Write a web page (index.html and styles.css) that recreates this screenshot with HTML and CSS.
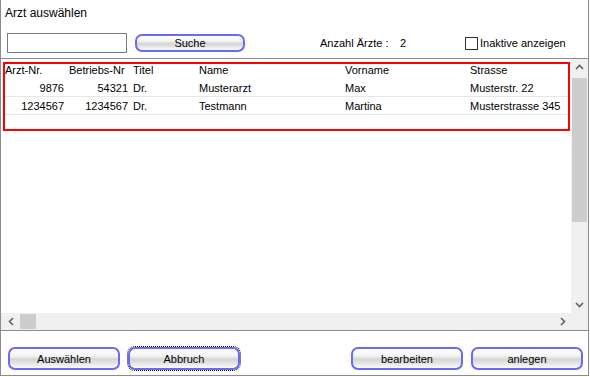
FILE: index.html
```html
<!DOCTYPE html>
<html lang="de">
<head>
    <meta charset="UTF-8">
    <title>Arzt auswählen</title>
    <link rel="stylesheet" href="styles.css">
</head>
<body>
<div class="window">
    <div class="title">Arzt auswählen</div>

    <div class="toolbar">
        <input type="text" class="search-input">
        <button class="btn btn-small">Suche</button>
        <span class="count-label">Anzahl Ärzte :</span>
        <span class="count-value">2</span>
        <span class="checkbox"></span>
        <span class="check-label">Inaktive anzeigen</span>
    </div>

    <div class="list">
        <div class="list-main">
            <div class="row head">
                <div class="cell">Arzt-Nr.</div>
                <div class="cell">Betriebs-Nr</div>
                <div class="cell">Titel</div>
                <div class="cell">Name</div>
                <div class="cell">Vorname</div>
                <div class="cell">Strasse</div>
            </div>
            <div class="row">
                <div class="cell num">9876</div>
                <div class="cell num">54321</div>
                <div class="cell">Dr.</div>
                <div class="cell">Musterarzt</div>
                <div class="cell">Max</div>
                <div class="cell">Musterstr. 22</div>
            </div>
            <div class="row">
                <div class="cell num">1234567</div>
                <div class="cell num">1234567</div>
                <div class="cell">Dr.</div>
                <div class="cell">Testmann</div>
                <div class="cell">Martina</div>
                <div class="cell">Musterstrasse 345</div>
            </div>
        </div>

        <div class="vscroll">
            <svg class="arrow" width="17" height="17" viewBox="0 0 17 17"><path d="M5 10 L8.5 6.5 L12 10" fill="none" stroke="#606060" stroke-width="1.6"/></svg>
            <div class="vthumb"></div>
            <div class="fill"></div>
            <svg class="arrow" width="17" height="17" viewBox="0 0 17 17"><path d="M5 7 L8.5 10.5 L12 7" fill="none" stroke="#606060" stroke-width="1.6"/></svg>
        </div>

        <div class="hscroll">
            <svg class="arrow" width="17" height="17" viewBox="0 0 17 17"><path d="M10 5 L6.5 8.5 L10 12" fill="none" stroke="#606060" stroke-width="1.6"/></svg>
            <div class="hthumb"></div>
            <div class="fill"></div>
            <svg class="arrow" width="17" height="17" viewBox="0 0 17 17"><path d="M7 5 L10.5 8.5 L7 12" fill="none" stroke="#606060" stroke-width="1.6"/></svg>
        </div>
        <div class="corner"></div>
    </div>

    <div class="footer">
        <button class="btn btn-wide">Auswählen</button>
        <button class="btn btn-wide focused">Abbruch</button>
        <button class="btn btn-wide push">bearbeiten</button>
        <button class="btn btn-wide">anlegen</button>
    </div>

    <div class="highlight"></div>
</div>
</body>
</html>
```

FILE: styles.css
```css
body {
    margin: 0;
    background-color: #fff;
    font-family: "Liberation Sans", Arial, sans-serif;
    font-size: 11px;
    color: #000;
}
.window {
    position: relative;
    width: 589px;
    height: 376px;
    box-sizing: border-box;
    border: 1px solid #8c8c8c;
    border-top: none;
    display: flex;
    flex-direction: column;
}
.title {
    height: 28px;
    box-sizing: border-box;
    padding: 6px 0 0 4px;
    font-size: 12px;
}
.toolbar {
    height: 30px;
    display: flex;
    align-items: center;
}
.search-input {
    width: 120px;
    height: 20px;
    box-sizing: border-box;
    margin: 0 0 0 6px;
    border: 1px solid #7a7a7a;
    padding: 0 3px;
    font: inherit;
}
.btn {
    box-sizing: border-box;
    border: 2px solid #6a6af5;
    border-radius: 7px;
    background: linear-gradient(#fff 0%, #f4f4f4 35%, #d6d6d6 55%, #e4e4e4 75%, #fcfcfc 100%);
    font-family: "Liberation Sans", Arial, sans-serif;
    font-size: 11px;
    color: #000;
    padding: 0;
    cursor: pointer;
}
.btn-small {
    width: 110px;
    height: 18px;
    margin-left: 8px;
}
.count-label {
    margin-left: 75px;
    width: 80px;
}
.count-value {
    width: 65px;
}
.checkbox {
    width: 13px;
    height: 13px;
    box-sizing: border-box;
    border: 1px solid #333;
    background-color: #fff;
}
.check-label {
    margin-left: 2px;
}
.list {
    border-top: 1px solid #8c8c8c;
    border-bottom: 1px solid #8c8c8c;
    display: grid;
    grid-template-columns: 570px 17px;
    grid-template-rows: 254px 17px;
}
.list-main {
    padding: 2px 0 0 2px;
    overflow: hidden;
}
.row {
    display: grid;
    grid-template-columns: 64px 64px 66px 146px 125px 1fr;
    height: 18px;
    box-sizing: border-box;
    border-bottom: 1px solid #e6e6e6;
    line-height: 17px;
    margin-right: 3px;
}
.row.head {
    border-bottom: none;
}
.cell {
    padding: 1px 0 0 2px;
    white-space: nowrap;
}
.cell.num {
    text-align: right;
    padding: 1px 3px 0 0;
}
.vscroll {
    background-color: #f0f0f0;
    display: flex;
    flex-direction: column;
    align-items: center;
}
.vthumb {
    width: 15px;
    height: 144px;
    margin-top: 2px;
    background-color: #cdcdcd;
}
.hscroll {
    background-color: #f0f0f0;
    display: flex;
    align-items: center;
    padding-left: 2px;
}
.hthumb {
    width: 16px;
    height: 15px;
    background-color: #cdcdcd;
}
.fill {
    flex: 1;
}
.arrow {
    display: block;
    flex: none;
}
.corner {
    background-color: #f0f0f0;
}
.footer {
    display: flex;
    padding: 16px 5px 0 7px;
    gap: 8px;
}
.btn-wide {
    width: 112px;
    height: 23px;
}
.focused {
    outline: 1px dotted #000;
    outline-offset: 0;
}
.push {
    margin-left: auto;
}
.highlight {
    position: absolute;
    left: 2px;
    top: 62px;
    width: 567px;
    height: 69px;
    box-sizing: border-box;
    border: 2px solid #f00;
}
```
